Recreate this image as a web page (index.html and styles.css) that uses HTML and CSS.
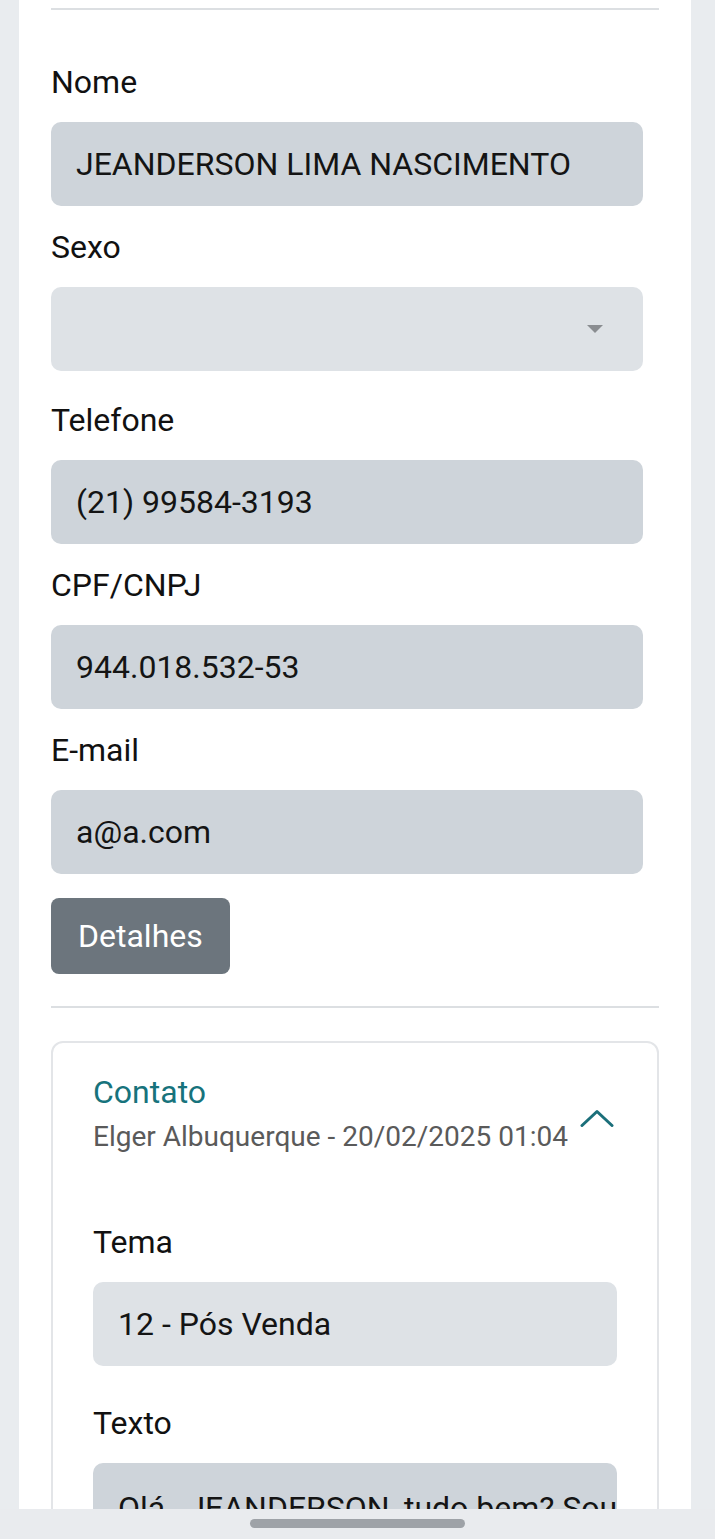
FILE: index.html
```html
<!DOCTYPE html>
<html lang="pt-BR">
<head>
<meta charset="utf-8">
<title>Cliente</title>
<link rel="stylesheet" href="styles.css">
</head>
<body>
<main class="page">
  <hr class="divider">
  <form class="form">
    <div class="field">
      <label class="label">Nome</label>
      <div class="input">JEANDERSON LIMA NASCIMENTO</div>
    </div>
    <div class="field field-select">
      <label class="label">Sexo</label>
      <div class="input input-light select"><span class="caret"></span></div>
    </div>
    <div class="field">
      <label class="label">Telefone</label>
      <div class="input">(21) 99584-3193</div>
    </div>
    <div class="field">
      <label class="label">CPF/CNPJ</label>
      <div class="input">944.018.532-53</div>
    </div>
    <div class="field">
      <label class="label">E-mail</label>
      <div class="input">a@a.com</div>
    </div>
    <button type="button" class="btn">Detalhes</button>
  </form>
  <hr class="divider divider-mid">
  <section class="card">
    <header class="card-head">
      <div class="card-titles">
        <h2 class="card-title">Contato</h2>
        <p class="card-sub">Elger Albuquerque - 20/02/2025 01:04</p>
      </div>
      <svg class="chevron" width="34" height="18" viewBox="0 0 34 18" aria-hidden="true">
        <path d="M2 16.5 L17 2.5 L32 16.5" fill="none" stroke="#1b6f7a" stroke-width="3" stroke-linecap="round" stroke-linejoin="round"/>
      </svg>
    </header>
    <div class="card-body">
      <div class="field">
        <label class="label">Tema</label>
        <div class="input input-light">12 - Pós Venda</div>
      </div>
      <div class="field">
        <label class="label">Texto</label>
        <div class="input textarea">Olá , JEANDERSON, tudo bem? Sou o Elger, da equipe de pós venda.</div>
      </div>
    </div>
  </section>
</main>
<div class="navbar"><span class="handle"></span></div>
</body>
</html>
```
FILE: styles.css
```css
html, body {
  margin: 0;
  padding: 0;
  height: 100%;
  overflow: hidden;
}
body {
  background: #e9ecef;
  font-family: Roboto, "Noto Sans", sans-serif;
  color: #111;
}
.page {
  margin-left: 19px;
  width: 672px;
  height: 100vh;
  box-sizing: border-box;
  background: #fff;
  padding: 8px 32px 0;
  overflow: hidden;
}
.divider {
  border: 0;
  border-top: 2px solid #dcdfe2;
  margin: 0;
}
.divider-mid {
  margin-top: 32px;
}
.form {
  display: flex;
  flex-direction: column;
  padding-top: 55px;
  padding-right: 16px;
}
.field + .field {
  margin-top: 24px;
}
.field-select {
  margin-bottom: 8px;
}
.label {
  display: block;
  font-size: 32px;
  line-height: 35px;
  margin-bottom: 22px;
  color: #111;
}
.input {
  height: 84px;
  box-sizing: border-box;
  border-radius: 10px;
  background: #ced4da;
  padding: 0 25px;
  display: flex;
  align-items: center;
  font-size: 32px;
  color: #141414;
  white-space: nowrap;
  overflow: hidden;
}
.input-light {
  background: #dee2e6;
}
.select {
  justify-content: flex-end;
  padding-right: 40px;
}
.caret {
  width: 0;
  height: 0;
  border-left: 8px solid transparent;
  border-right: 8px solid transparent;
  border-top: 8px solid #8a8d91;
}
.btn {
  align-self: flex-start;
  margin-top: 24px;
  height: 76px;
  padding: 0 27px;
  border: 0;
  border-radius: 8px;
  background: #6c757d;
  color: #fff;
  font-family: Roboto, "Noto Sans", sans-serif;
  font-size: 32px;
}
.card {
  margin-top: 33px;
  border: 2px solid #e3e5e8;
  border-radius: 12px;
  padding: 31px 40px 0;
  height: 600px;
}
.card-head {
  display: flex;
  align-items: center;
  justify-content: space-between;
}
.card-title {
  margin: 0;
  font-size: 32px;
  line-height: 36px;
  font-weight: 400;
  color: #17737c;
}
.card-sub {
  margin: 10px 0 0;
  font-size: 28px;
  line-height: 34px;
  color: #5a5a5a;
}
.chevron {
  margin-right: 3px;
  margin-top: 8px;
}
.card-body {
  padding-top: 71px;
}
.card-body .field + .field {
  margin-top: 40px;
}
.textarea {
  align-items: flex-start;
  padding-top: 26px;
  height: 140px;
}
.navbar {
  position: fixed;
  left: 0;
  right: 0;
  bottom: 0;
  height: 30px;
  background: #e9ebee;
  display: flex;
  justify-content: center;
  padding-top: 10px;
  box-sizing: border-box;
}
.handle {
  width: 215px;
  height: 9px;
  border-radius: 5px;
  background: #9ea2a7;
}
```
